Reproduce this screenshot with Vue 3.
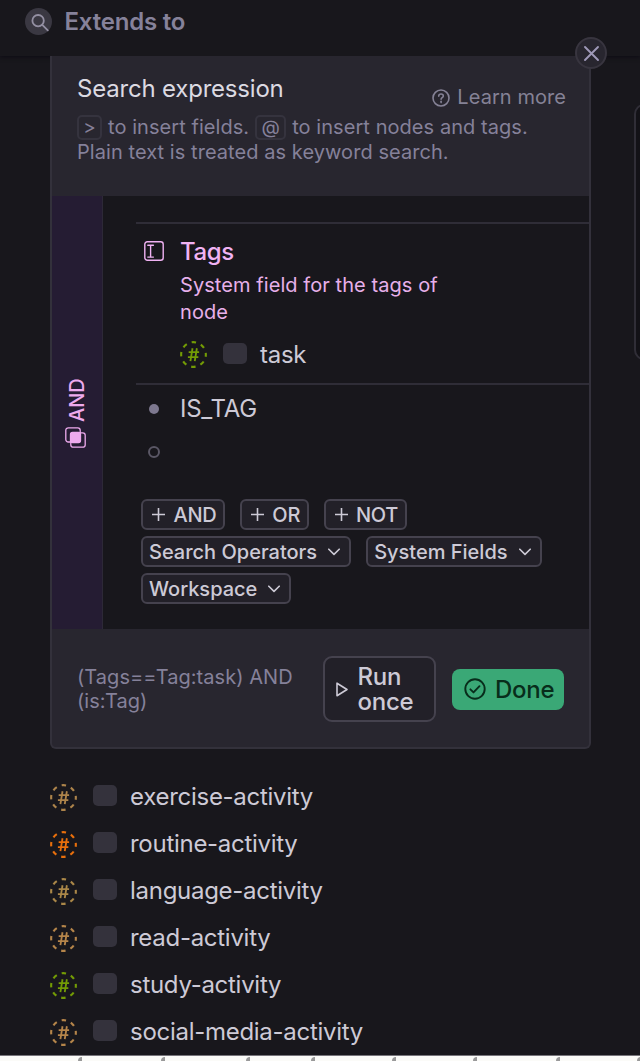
<script setup>
const tags = [
  { name: 'exercise-activity', color: '#ad844b' },
  { name: 'routine-activity', color: '#e86f0c' },
  { name: 'language-activity', color: '#aa8748' },
  { name: 'read-activity', color: '#b5854a' },
  { name: 'study-activity', color: '#739b05' },
  { name: 'social-media-activity', color: '#b5854a' }
]

const operators = ['AND', 'OR', 'NOT']
const menus = ['Search Operators', 'System Fields', 'Workspace']
const ticks = [78, 161, 246, 311, 392, 473, 556, 637]
</script>

<template>
  <div class="page">
    <header class="topbar">
      <span class="search-icon">
        <svg width="27" height="27" viewBox="0 0 27 27">
          <circle cx="13.1" cy="12.7" r="5.7" />
          <path d="M17.3 16.9l5.500 5.500" />
        </svg>
      </span>
      <h1>Extends to</h1>
    </header>

    <section class="panel">
      <button class="close" aria-label="Close">
        <svg width="31" height="31" viewBox="0 0 31 31">
          <path d="M9 9l13 13M22 9L9 22" />
        </svg>
      </button>

      <div class="panel-head">
        <div class="head-row">
          <h2>Search expression</h2>
          <a class="learn">
            <svg width="18" height="18" viewBox="0 0 18 18">
              <circle cx="9" cy="9" r="8" />
              <path d="M6.7 7.1c.1-1.400 1-2.100 2.300-2.100s2.300.8 2.300 2c0 1.600-2.200 1.700-2.200 3.300" />
              <path d="M9.100 12.300v1.300" />
            </svg>
            <span>Learn more</span>
          </a>
        </div>
        <p>
          <kbd>&gt;</kbd><span class="part-a">to insert fields.</span><kbd class="at">@</kbd
          ><span class="part-b">to insert nodes and tags.</span>
        </p>
        <p>Plain text is treated as keyword search.</p>
      </div>

      <div class="panel-body">
        <aside class="rail">
          <span class="rail-text">AND</span>
          <svg width="21" height="21" viewBox="0 0 21 21">
            <rect class="fill" x="5.500" y="5.500" width="10" height="10" rx="2" />
            <rect x=".8" y=".8" width="14.400" height="14.200" rx="2.500" />
            <rect x="5.800" y="5.800" width="14.400" height="14.400" rx="2.500" />
          </svg>
        </aside>

        <div class="query">
          <div class="field">
            <svg class="field-icon" width="20" height="20" viewBox="0 0 20 20">
              <rect x=".8" y=".8" width="18.400" height="18.400" rx="2.500" />
              <path d="M3.800 4.300h5.600M6.600 4.300v11.800M3.800 16.100h5.600" />
            </svg>
            <div>
              <h3>Tags</h3>
              <p class="field-info">System field for the tags of node</p>
              <div class="tag-row in-field">
                <svg class="tag-icon green" width="27" height="27" viewBox="0 0 28 28">
                  <circle cx="14" cy="14" r="12.800" />
                  <path d="M9 11.600h10.800M8.200 16.700h10.800M13 7.500l-2.200 13.400M17.500 7.500l-2.200 13.400" />
                </svg>
                <span class="box"></span>
                <span class="name">task</span>
              </div>
            </div>
          </div>

          <div class="line">
            <span class="dot"></span>
            <span class="name">IS_TAG</span>
          </div>
          <div class="line empty">
            <span class="ring"></span>
          </div>

          <div class="buttons">
            <div class="button-row">
              <button v-for="op in operators" :key="op" class="chip op">
                <svg width="13" height="13" viewBox="0 0 13 13"><path d="M6.500 0v13M0 6.500h13" /></svg>
                <span>{{ op }}</span>
              </button>
            </div>
            <div class="button-row">
              <button v-for="menu in menus" :key="menu" class="chip">
                <span>{{ menu }}</span>
                <svg width="12" height="8" viewBox="0 0 12 8"><path d="M.8 1.200L6 6.400l5.200-5.200" /></svg>
              </button>
            </div>
          </div>
        </div>
      </div>

      <footer class="panel-foot">
        <p>(Tags==Tag:task) AND (is:Tag)</p>
        <button class="run">
          <svg width="12" height="15" viewBox="0 0 12 15"><path d="M1 1.200v12.600l10-6.300z" /></svg>
          <span>Run once</span>
        </button>
        <button class="done">
          <svg width="22" height="22" viewBox="0 0 22 22">
            <circle cx="11" cy="11" r="9.700" />
            <path d="M6.400 11.300l3.100 3.100 6-6.200" />
          </svg>
          <span>Done</span>
        </button>
      </footer>
    </section>

    <ul class="tags">
      <li v-for="tag in tags" :key="tag.name" class="tag-row" :style="{ '--tag': tag.color }">
        <svg class="tag-icon" width="27" height="27" viewBox="0 0 28 28">
          <circle cx="14" cy="14" r="12.800" />
          <path d="M9 11.600h10.800M8.200 16.700h10.800M13 7.500l-2.200 13.400M17.500 7.500l-2.200 13.400" />
        </svg>
        <span class="box"></span>
        <span class="name">{{ tag.name }}</span>
      </li>
    </ul>

    <div class="side-card"></div>
    <div class="strip">
      <i v-for="x in ticks" :key="x" :style="{ left: x + 'px' }"></i>
    </div>
  </div>
</template>

<style>
body {
  margin: 0;
  background: #18171c;
}
</style>

<style scoped>
* {
  box-sizing: border-box;
}

.page {
  position: relative;
  display: flex;
  flex-direction: column;
  width: 640px;
  height: 1061px;
  overflow: hidden;
  background: #18171c;
  color: #cdcad6;
  font-family: Inter, 'Liberation Sans', sans-serif;
  font-size: 24px;
}

h1,
h2,
h3,
p,
ul {
  margin: 0;
  padding: 0;
}

svg {
  display: block;
  flex: none;
  fill: none;
  stroke: currentColor;
  stroke-width: 1.6;
  stroke-linecap: round;
  stroke-linejoin: round;
}

button {
  margin: 0;
  font-family: inherit;
  color: inherit;
}

.topbar {
  display: flex;
  align-items: center;
  flex: none;
  height: 56px;
  padding: 0 0 13px 25px;
  background: #18171c;
  box-shadow: 0 1px 4px #0d0b14;
}

.search-icon {
  width: 27px;
  height: 27px;
  margin-right: 12.5px;
  border-radius: 50%;
  background: #3a3842;
  color: #9490a3;
}

.search-icon svg {
  stroke-width: 1.8;
}

h1 {
  font-size: 24px;
  line-height: 30px;
  font-weight: 600;
  letter-spacing: -0.2px;
  color: #86829a;
}

.panel {
  position: relative;
  flex: none;
  width: 541px;
  height: 693px;
  margin-left: 50px;
  border: 2px solid #33313b;
  border-top: 0;
  border-radius: 0 0 6px 6px;
  background: #28262f;
}

.close {
  position: absolute;
  top: -19px;
  right: -18px;
  width: 32px;
  height: 32px;
  padding: 0;
  border: 2px solid #38353f;
  border-radius: 50%;
  background: #28262f;
  color: #9f99b8;
}

.close svg {
  margin: -1px;
  stroke-width: 1.9;
}

.panel-head {
  height: 140px;
  padding: 18px 23px 0 25px;
  font-size: 20px;
  line-height: 24.5px;
  letter-spacing: 0.06px;
  color: #85819a;
}

.head-row {
  display: flex;
  justify-content: space-between;
  height: 41px;
}

h2 {
  font-size: 24px;
  line-height: 30px;
  font-weight: 400;
  letter-spacing: -0.2px;
  color: #dcdae2;
}

.learn {
  display: flex;
  align-items: center;
  gap: 7px;
  height: 25px;
  margin-top: 11px;
  color: #858296;
}

.panel-head p {
  display: flex;
  white-space: nowrap;
  color: #85819a;
}

kbd {
  width: 25px;
  height: 25px;
  border: 2px solid #35333e;
  border-radius: 5px;
  font: inherit;
  font-size: 19px;
  line-height: 22px;
  text-align: center;
}

kbd.at {
  width: 31px;
}

.part-a {
  margin: 0 6px 0 6px;
}

.part-b {
  margin-left: 6px;
}

.panel-body {
  display: flex;
  height: 433px;
  background: #18171c;
}

.rail {
  display: flex;
  flex-direction: column;
  align-items: center;
  width: 51px;
  padding: 182px 4px 0 0;
  border-right: 1px solid #2d2937;
  background: #251c33;
  color: #eeaaee;
}

.rail-text {
  height: 44px;
  margin: 0 0 5px 3px;
  writing-mode: vertical-rl;
  transform: rotate(180deg);
  font-size: 20px;
  line-height: 24px;
  font-weight: 450;
}

.rail svg {
  stroke-width: 1.3;
}

.rail .fill {
  fill: currentColor;
}

.query {
  flex: 1;
  padding: 25.5px 0 0 33px;
}

.field {
  display: flex;
  height: 163.5px;
  padding: 13px 0 0 8px;
  border-top: 2px solid #2f2d37;
  border-bottom: 2px solid #2f2d37;
  color: #f0b2f3;
}

.field-icon {
  margin: 4.5px 16px 0 0;
  stroke-width: 1.4;
}

h3 {
  font-size: 24px;
  line-height: 30px;
  font-weight: 500;
  letter-spacing: -0.4px;
}

.field-info {
  width: 290px;
  margin-top: 5px;
  font-size: 20px;
  line-height: 27.5px;
  letter-spacing: 0.07px;
  color: #e7b0ea;
}

.tag-row {
  display: flex;
  align-items: center;
  height: 47px;
  color: #cdcad6;
  line-height: 30px;
}

.name {
  letter-spacing: -0.28px;
}

.tag-icon {
  margin-right: 16px;
  color: var(--tag);
  stroke-width: 2.2;
  stroke-linecap: butt;
}

.tag-icon.green {
  color: #739b05;
}

.tag-icon circle {
  stroke-dasharray: 4.7 5.353;
  stroke-dashoffset: 2.35;
}

.tag-icon path {
  stroke-width: 1.9;
}

.box {
  width: 24px;
  height: 21px;
  margin: -3px 13px 0 0;
  border-radius: 5px;
  background: #34323c;
}

.in-field {
  height: 30px;
  margin-top: 13px;
}

.line {
  display: flex;
  align-items: center;
  height: 45px;
  padding: 2px 0 0 13px;
}

.line.empty {
  padding-top: 0;
  height: 44px;
}

.dot {
  width: 10px;
  height: 10px;
  margin-right: 21px;
  border-radius: 50%;
  background: #7d788f;
}

.ring {
  width: 12px;
  height: 12px;
  margin-left: -1px;
  border: 2px solid #5a5765;
  border-radius: 50%;
}

.buttons {
  display: flex;
  flex-direction: column;
  gap: 6px;
  padding: 25px 0 0 5px;
}

.button-row {
  display: flex;
  flex-wrap: wrap;
  gap: 6px 15px;
}

.chip {
  display: flex;
  align-items: center;
  height: 31px;
  gap: 11px;
  padding: 0 9px 0 6px;
  border: 2px solid #45424e;
  border-radius: 6px;
  background: #222028;
  font-size: 20px;
  line-height: 26px;
  font-weight: 450;
}

.chip.op {
  gap: 8.5px;
  padding: 0 6.5px 0 9px;
}

.chip.op span {
  letter-spacing: -0.3px;
}

.panel-foot {
  display: flex;
  align-items: center;
  height: 118px;
  padding: 2px 25px 0 25px;
}

.panel-foot p {
  width: 230px;
  margin-right: 16px;
  font-size: 20px;
  line-height: 24.5px;
  letter-spacing: 0.05px;
  color: #85819a;
}

.run,
.done {
  display: flex;
  align-items: center;
  font-size: 24px;
  line-height: 25px;
  font-weight: 450;
  letter-spacing: -0.25px;
  text-align: left;
}

.run {
  width: 113px;
  height: 66px;
  gap: 9.5px;
  margin-right: 16px;
  padding: 0 15px 0 11px;
  border: 2px solid #45424e;
  border-radius: 9px;
  background: #222028;
}

.done {
  width: 112px;
  height: 41px;
  gap: 9px;
  padding: 0 12px;
  border: 0;
  border-radius: 8px;
  background: #3aa876;
  color: #082d1b;
}

.done svg {
  stroke-width: 1.9;
}

.tags {
  padding: 24.5px 0 0 50px;
  list-style: none;
}

.side-card {
  position: absolute;
  top: 104px;
  left: 634px;
  width: 40px;
  height: 256px;
  border: 2px solid #302e37;
  border-radius: 10px;
  background: #131217;
}

/* light edge of the sheet below the page */
.strip {
  position: absolute;
  left: 0;
  bottom: 0;
  width: 640px;
  height: 6px;
  border-top: 1px solid #77757b;
  background: #fbfbf8;
}

.strip i {
  position: absolute;
  top: 1px;
  width: 4px;
  height: 4px;
  border-top-left-radius: 4px;
  background: #999;
}
</style>
